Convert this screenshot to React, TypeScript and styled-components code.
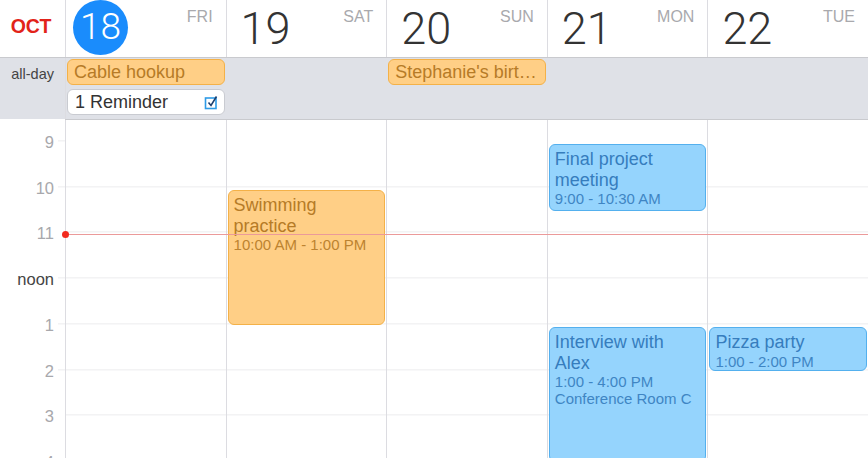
import React from "react";
import styled, { createGlobalStyle } from "styled-components";

const HOUR = 45.75;
const START = 8.5;

const Global = createGlobalStyle`
  html, body { margin: 0; padding: 0; background: #fff; }
  body { font-family: "Liberation Sans", Arial, sans-serif; }
  * { box-sizing: border-box; }
`;

const COLS = "65px repeat(5, minmax(0, 1fr))";

const Page = styled.div`
  width: 868px;
  height: 458px;
  overflow: hidden;
  display: flex;
  flex-direction: column;
  background: #fff;
`;

const Row = styled.div<{ $h: number; $bg?: string }>`
  display: grid;
  grid-template-columns: ${COLS};
  height: ${(p) => p.$h}px;
  flex: none;
  background: ${(p) => p.$bg || "#fff"};
  border-bottom: 1px solid #c9cace;
`;

const MonthCell = styled.div`
  display: flex;
  align-items: center;
  justify-content: center;
  padding-right: 3px;
  padding-bottom: 4px;
  color: #e2231a;
  font-size: 19.5px;
  font-weight: 700;
  letter-spacing: -0.3px;
`;

const DayHead = styled.div`
  border-left: 1px solid #dcdce1;
  display: flex;
  justify-content: space-between;
  padding: 0 13px 0 14px;
  min-width: 0;
`;

const DayNum = styled.div<{ $today?: boolean }>`
  font-family: Roboto, "Liberation Sans", sans-serif;
  font-weight: 300;
  display: flex;
  align-items: center;
  justify-content: center;
  align-self: ${(p) => (p.$today ? "flex-start" : "center")};
  margin-left: ${(p) => (p.$today ? "-7px" : "0")};
  width: ${(p) => (p.$today ? "55px" : "auto")};
  height: ${(p) => (p.$today ? "55px" : "auto")};
  border-radius: 50%;
  background: ${(p) => (p.$today ? "#1a8cfc" : "transparent")};
  color: ${(p) => (p.$today ? "#fff" : "#333")};
  font-size: ${(p) => (p.$today ? "37px" : "45px")};
  line-height: 1;
  padding-bottom: ${(p) => (p.$today ? "2px" : "1px")};
`;

const DayName = styled.div`
  margin-top: 9px;
  font-size: 16px;
  color: #a9a9ad;
  line-height: 16px;
`;

const AllDayLabel = styled.div`
  font-size: 14.5px;
  color: #444;
  text-align: right;
  padding: 8px 11px 0 0;
`;

const AllDayCell = styled.div<{ $first?: boolean }>`
  border-left: 1px solid ${(p) => (p.$first ? "#dcdce1" : "transparent")};
  display: flex;
  flex-direction: column;
  gap: 4px;
  padding: 1px 1px 0 1px;
  min-width: 0;
`;

const AllDayEvent = styled.div`
  height: 26px;
  border: 1px solid #f4b148;
  background: #ffcf86;
  border-radius: 6px;
  color: #b67b27;
  font-size: 18px;
  line-height: 24px;
  padding: 0 6px;
  white-space: nowrap;
  overflow: hidden;
  text-overflow: ellipsis;
`;

const Reminder = styled.div`
  height: 26px;
  border: 1px solid #c9cbd1;
  background: #fff;
  border-radius: 6px;
  color: #333;
  font-size: 18px;
  line-height: 24px;
  padding: 0 5px 0 7px;
  display: flex;
  align-items: center;
  justify-content: space-between;
`;

const Body = styled.div`
  position: relative;
  flex: 1;
  display: grid;
  grid-template-columns: ${COLS};
  background-image: repeating-linear-gradient(
    to bottom,
    transparent 0,
    transparent ${HOUR - 1}px,
    #ececee ${HOUR - 1}px,
    #ececee ${HOUR}px
  );
  background-position: 0 ${HOUR / 2 - 1.5}px;
  background-repeat: repeat;
`;

const Gutter = styled.div`
  background: #fff;
  display: flex;
  flex-direction: column;
  margin-top: -1px;
  position: relative;
`;

const Tick = styled.div`
  position: absolute;
  right: 0;
  top: 0;
  bottom: 0;
  width: 7px;
  background-image: repeating-linear-gradient(
    to bottom,
    transparent 0,
    transparent ${HOUR - 1}px,
    #ececee ${HOUR - 1}px,
    #ececee ${HOUR}px
  );
  background-position: 0 ${HOUR / 2 - 0.5}px;
`;

const HourLabel = styled.div<{ $noon?: boolean }>`
  height: ${HOUR}px;
  flex: none;
  display: flex;
  align-items: center;
  justify-content: flex-end;
  padding-right: 11px;
  padding-top: 1px;
  font-size: 16.5px;
  color: ${(p) => (p.$noon ? "#444" : "#a8a8ac")};
`;

const DayCol = styled.div`
  position: relative;
  border-left: 1px solid #dcdce1;
  min-width: 0;
`;

const Event = styled.div<{ $kind: "orange" | "blue" }>`
  position: absolute;
  left: 1px;
  right: 1px;
  border-radius: 6px;
  border: 1px solid ${(p) => (p.$kind === "orange" ? "#f4b148" : "#54b0ee")};
  background: ${(p) => (p.$kind === "orange" ? "#ffcf86" : "#95d4fd")};
  color: ${(p) => (p.$kind === "orange" ? "#b67b27" : "#367dbd")};
  padding: 4px 5px;
  overflow: hidden;
`;

const EvTitle = styled.div`
  font-size: 18px;
  line-height: 20.5px;
`;

const EvSub = styled.div`
  font-size: 15px;
  line-height: 17px;
  opacity: 0.9;
`;

const NowLine = styled.div`
  position: absolute;
  left: 65px;
  right: 0;
  height: 1px;
  background: #eb9a9a;
`;

const NowDot = styled.div`
  position: absolute;
  left: -3.5px;
  top: -3px;
  width: 7px;
  height: 7px;
  border-radius: 50%;
  background: #f22b1f;
`;

type Ev = { day: number; start: number; end: number; kind: "orange" | "blue"; title: string; lines: string[] };

const events: Ev[] = [
  { day: 1, start: 10, end: 13, kind: "orange", title: "Swimming practice", lines: ["10:00 AM - 1:00 PM"] },
  { day: 3, start: 9, end: 10.5, kind: "blue", title: "Final project meeting", lines: ["9:00 - 10:30 AM"] },
  { day: 3, start: 13, end: 16, kind: "blue", title: "Interview with Alex", lines: ["1:00 - 4:00 PM", "Conference Room C"] },
  { day: 4, start: 13, end: 14, kind: "blue", title: "Pizza party", lines: ["1:00 - 2:00 PM"] },
];

const days = [
  { num: "18", name: "FRI", today: true },
  { num: "19", name: "SAT" },
  { num: "20", name: "SUN" },
  { num: "21", name: "MON" },
  { num: "22", name: "TUE" },
];

const hours = ["9", "10", "11", "noon", "1", "2", "3", "4"];

const CheckIcon = () => (
  <svg width="15" height="15" viewBox="0 0 15 15">
    <rect x="1.5" y="3" width="10.5" height="10.5" fill="#fff" stroke="#2e9be6" strokeWidth="1.6" />
    <path d="M4.5 7.5 L7 10.5 L12.5 1.5" fill="none" stroke="#1d3f6e" strokeWidth="1.6" />
  </svg>
);

export default function App() {
  return (
    <>
      <Global />
      <Page>
        <Row $h={58}>
          <MonthCell>OCT</MonthCell>
          {days.map((d) => (
            <DayHead key={d.num}>
              <DayNum $today={d.today}>{d.num}</DayNum>
              <DayName>{d.name}</DayName>
            </DayHead>
          ))}
        </Row>
        <Row $h={62} $bg="#dfe1e7">
          <AllDayLabel>all-day</AllDayLabel>
          <AllDayCell $first>
            <AllDayEvent>Cable hookup</AllDayEvent>
            <Reminder>
              <span>1 Reminder</span>
              <CheckIcon />
            </Reminder>
          </AllDayCell>
          <AllDayCell />
          <AllDayCell>
            <AllDayEvent>Stephanie's birthday</AllDayEvent>
          </AllDayCell>
          <AllDayCell />
          <AllDayCell />
        </Row>
        <Body>
          <Gutter>
            <Tick />
            {hours.map((h) => (
              <HourLabel key={h} $noon={h === "noon"}>
                {h}
              </HourLabel>
            ))}
          </Gutter>
          {days.map((d, i) => (
            <DayCol key={d.num}>
              {events
                .filter((e) => e.day === i)
                .map((e) => (
                  <Event
                    key={e.title}
                    $kind={e.kind}
                    style={{
                      top: (e.start - START) * HOUR + 1.5,
                      height: (e.end - e.start) * HOUR - 2.5,
                    }}
                  >
                    <EvTitle>{e.title}</EvTitle>
                    {e.lines.map((l) => (
                      <EvSub key={l}>{l}</EvSub>
                    ))}
                  </Event>
                ))}
            </DayCol>
          ))}
          <NowLine style={{ top: (11 - START) * HOUR - 0.5 }}>
            <NowDot />
          </NowLine>
        </Body>
      </Page>
    </>
  );
}
